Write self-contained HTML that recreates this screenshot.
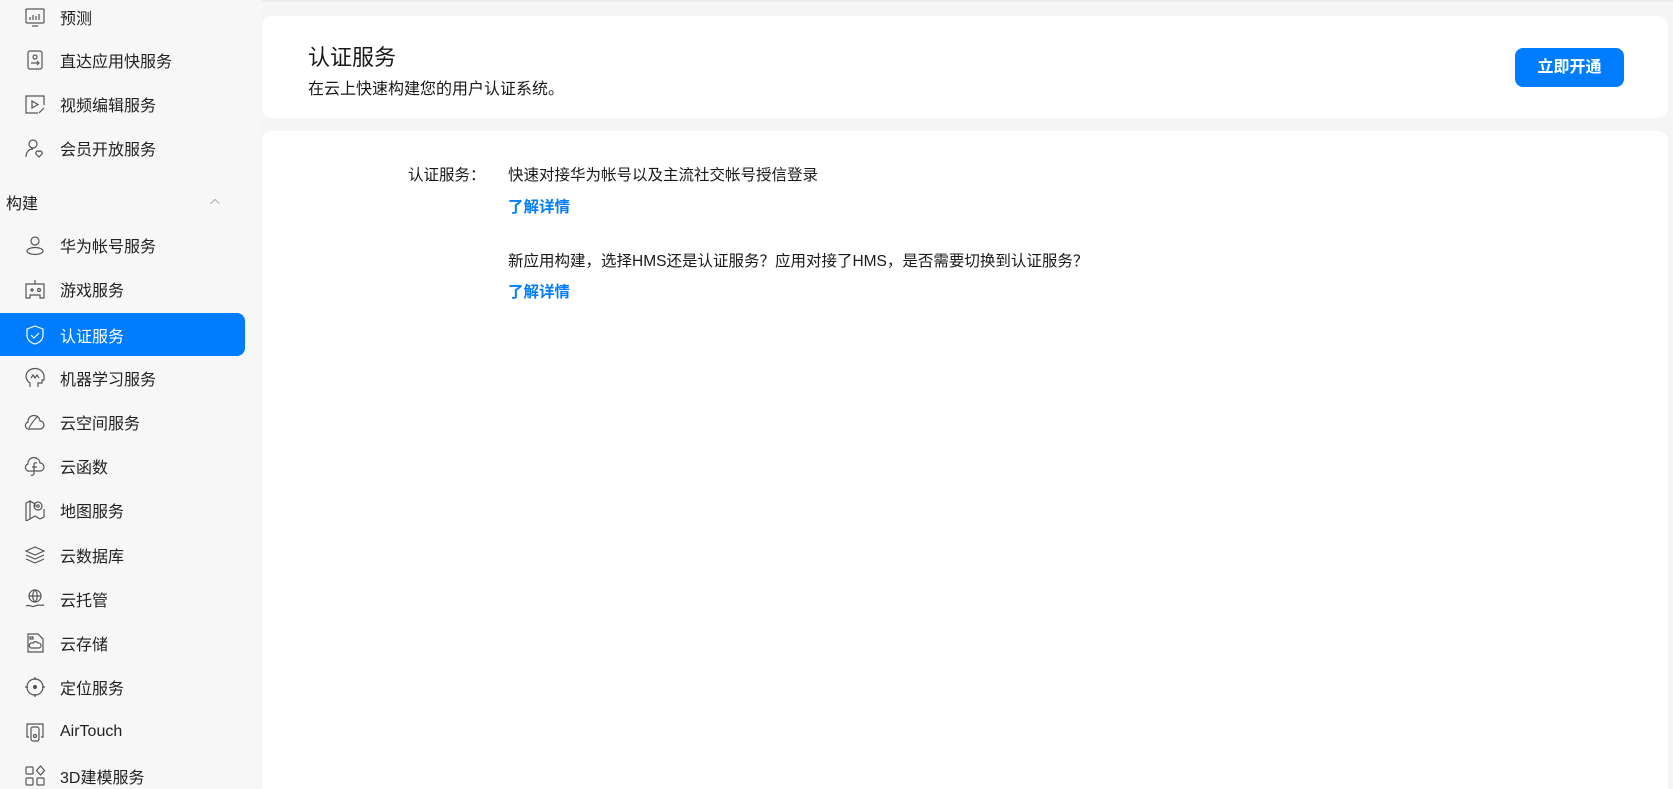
<!DOCTYPE html>
<html style="overflow:hidden;height:789px"><head><meta charset="utf-8"><style>
*{margin:0;padding:0;box-sizing:border-box}
body{width:1673px;height:789px;overflow:hidden;background:#f5f5f5;font-family:"Liberation Sans","Noto Sans CJK SC",sans-serif;color:#191919;position:relative}
.top{position:absolute;left:0;top:0;width:1673px;height:2px;background:#ececec}
.side{position:absolute;left:0;top:0;width:262px;height:789px;background:#f7f7f7}
.it{position:absolute;left:0;width:245px;height:43px;display:flex;align-items:center;font-size:16px;color:#222}
.it svg{position:absolute;left:24px;width:22px;height:22px;fill:none;stroke:#555;stroke-width:1.2}
.it span{position:absolute;left:60px}
.act{background:#007dff;border-radius:0 8px 8px 0;color:#fff}
.act svg{stroke:#fff}
.card{position:absolute;left:262px;width:1406px;background:#fff;border-radius:10px}
.btn{position:absolute;left:1515px;top:48px;width:109px;height:39px;background:#007dff;border-radius:8px;color:#fff;font-size:16px;font-weight:bold;text-align:center;line-height:39px}
.t{position:absolute;font-size:15.5px;white-space:nowrap}
.l{color:#007dff;font-weight:bold}
</style></head><body>
<div class="top"></div>
<div class="side">
<div class="it" style="top:-5px"><svg viewBox="0 0 22 22"><rect x="2" y="3" width="18" height="14" rx="1"/><path d="M6 14v-3M9 14v-5M12 14v-4M15 14v-6M8 20h6"/></svg><span>预测</span></div>
<div class="it" style="top:38px"><svg viewBox="0 0 22 22"><rect x="4" y="2" width="14" height="18" rx="2"/><circle cx="11" cy="8" r="2"/><path d="M7 14h8M13 12l2 2-2 2"/></svg><span>直达应用快服务</span></div>
<div class="it" style="top:82px"><svg viewBox="0 0 22 22"><path d="M20 12V3H2v17h12"/><path d="M8 8l6 3.5-6 3.5z"/><path d="M15 20l5-5"/></svg><span>视频编辑服务</span></div>
<div class="it" style="top:126px"><svg viewBox="0 0 22 22"><circle cx="9" cy="7" r="4"/><path d="M2 20c0-5 3-8 7-8"/><path d="M15 20l-3-3a2 2 0 013-2.5 2 2 0 013 2.5z"/></svg><span>会员开放服务</span></div>
<div class="it" style="top:180px"><span style="left:6px">构建</span><svg viewBox="0 0 22 22" style="left:208px;width:14px;height:14px;stroke:#999"><path d="M4 14l7-7 7 7"/></svg></div>
<div class="it" style="top:223px"><svg viewBox="0 0 22 22"><circle cx="11" cy="7" r="4"/><ellipse cx="11" cy="17" rx="8" ry="3.5"/></svg><span>华为帐号服务</span></div>
<div class="it" style="top:267px"><svg viewBox="0 0 22 22"><path d="M2 6h18v14h-4v-3H6v3H2z M11 2v4"/><path d="M6 12h4M8 10v4"/><circle cx="15" cy="12" r="1.5"/></svg><span>游戏服务</span></div>
<div class="it act" style="top:313px"><svg viewBox="0 0 22 22"><path d="M11 2l8 3v6c0 5-4 8-8 9-4-1-8-4-8-9V5z"/><path d="M7 11l3 3 5-5"/></svg><span>认证服务</span></div>
<div class="it" style="top:356px"><svg viewBox="0 0 22 22"><path d="M6 20v-4c-3-2-4-4-4-7a9 8 0 0118 1v3h-2v3h-4v4"/><path d="M7 11l2-3 2 3 2-3 2 3"/></svg><span>机器学习服务</span></div>
<div class="it" style="top:400px"><svg viewBox="0 0 22 22"><path d="M6 18h10a4 4 0 000-8 6 6 0 00-12 1 3.5 3.5 0 002 7z M5 17c3-6 7-10 9-12"/></svg><span>云空间服务</span></div>
<div class="it" style="top:444px"><svg viewBox="0 0 22 22"><path d="M6 16h10a4 4 0 000-8 6 6 0 00-12 1 3.5 3.5 0 002 7"/><path d="M13 8c-2-1-3 0-3 2v8c0 2-2 3-3 2M8 12h5"/></svg><span>云函数</span></div>
<div class="it" style="top:488px"><svg viewBox="0 0 22 22"><path d="M2 4l4-2v18l-4 2z M6 2l5 3v3M6 20l5-3 5 3 4-2v-8"/><circle cx="14" cy="7" r="4"/><circle cx="14" cy="7" r="1.2"/></svg><span>地图服务</span></div>
<div class="it" style="top:533px"><svg viewBox="0 0 22 22"><path d="M11 3l9 4-9 4-9-4z M2 11l9 4 9-4M2 15l9 4 9-4"/></svg><span>云数据库</span></div>
<div class="it" style="top:577px"><svg viewBox="0 0 22 22"><circle cx="11" cy="8" r="6"/><path d="M5 8h12M11 2c-3 3-3 9 0 12M11 2c3 3 3 9 0 12M2 18c4-2 6 2 9 0 3-2 6 0 9-1"/></svg><span>云托管</span></div>
<div class="it" style="top:621px"><svg viewBox="0 0 22 22"><path d="M4 2h10l5 5v13H4z"/><path d="M7 16h8a2.5 2.5 0 00-1-5 3 3 0 00-5 0 2.5 2.5 0 00-2 5z"/><rect x="6" y="5" width="3" height="2"/></svg><span>云存储</span></div>
<div class="it" style="top:665px"><svg viewBox="0 0 22 22"><circle cx="11" cy="11" r="8"/><circle cx="11" cy="11" r="1.5" fill="#555"/><path d="M11 1v3M11 18v3M1 11h3M18 11h3"/></svg><span>定位服务</span></div>
<div class="it" style="top:710px"><svg viewBox="0 0 22 22"><path d="M5 16H3V3h16v13h-2"/><rect x="7" y="6" width="8" height="14" rx="2"/><circle cx="11" cy="15" r="1.5"/></svg><span>AirTouch</span></div>
<div class="it" style="top:754px"><svg viewBox="0 0 22 22"><rect x="2" y="2" width="7" height="7" rx="1"/><rect x="2" y="13" width="7" height="7" rx="1"/><rect x="13" y="13" width="7" height="7" rx="1"/><path d="M16.5 1l4 4.5-4 4.5-4-4.5z"/></svg><span>3D建模服务</span></div>
</div>
<div class="card" style="top:16px;height:102px"></div>
<div class="card" style="top:131px;height:658px;border-radius:10px 10px 0 0"></div>
<div class="t" style="left:308px;top:40px;font-size:22px">认证服务</div>
<div class="t" style="left:308px;top:75px;font-size:16px">在云上快速构建您的用户认证系统。</div>
<div class="btn">立即开通</div>
<div class="t" style="left:408px;top:163px">认证服务：</div>
<div class="t" style="left:508px;top:163px">快速对接华为帐号以及主流社交帐号授信登录</div>
<div class="t l" style="left:508px;top:195px">了解详情</div>
<div class="t" style="left:508px;top:249px">新应用构建，选择HMS还是认证服务？应用对接了HMS，是否需要切换到认证服务？</div>
<div class="t l" style="left:508px;top:280px">了解详情</div>
</body></html>
